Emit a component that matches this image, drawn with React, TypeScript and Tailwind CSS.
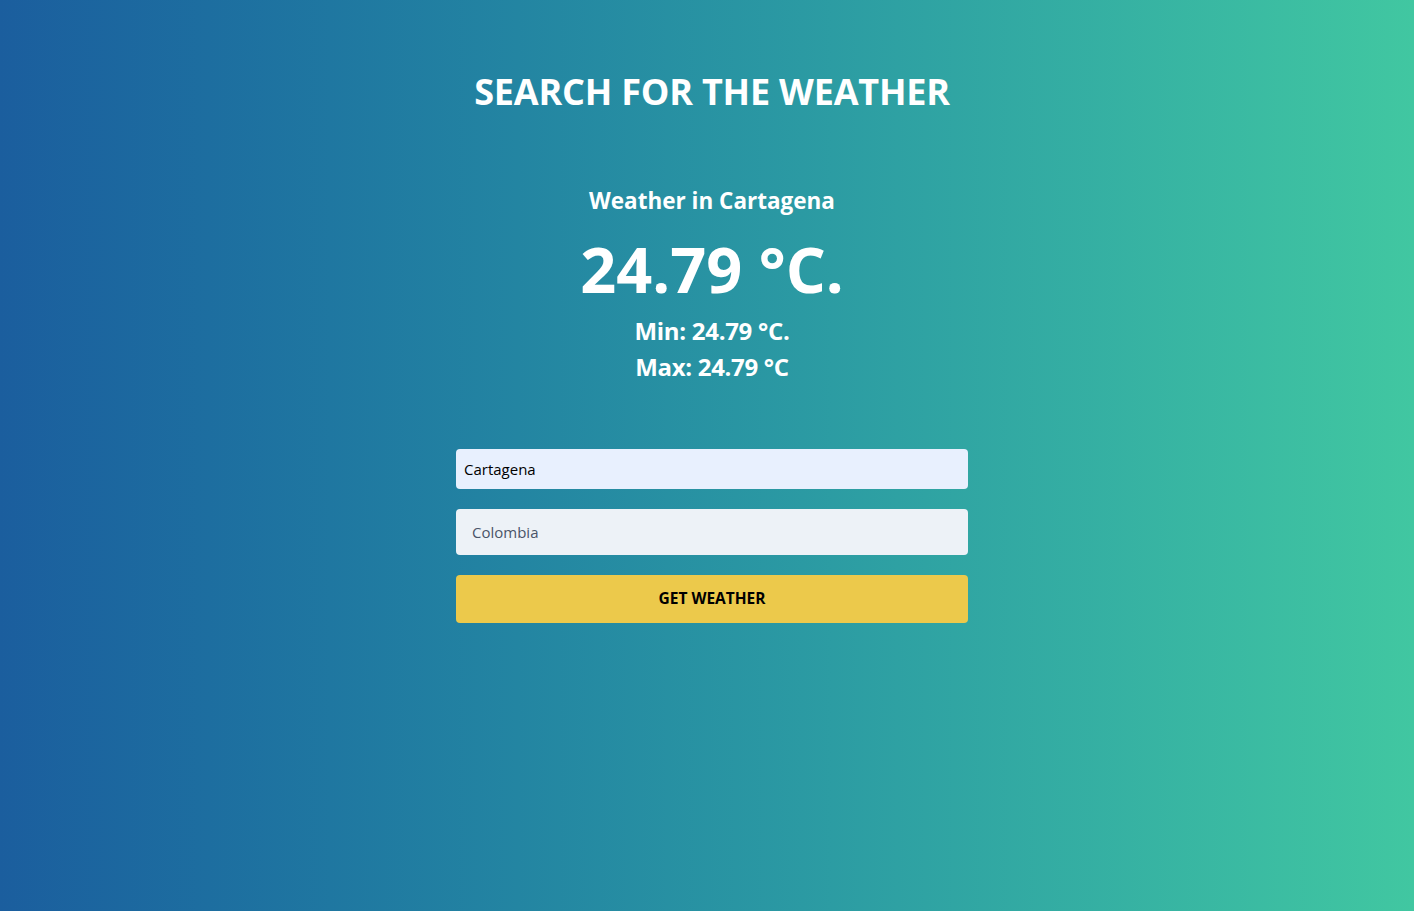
import React from 'react';

const font = { fontFamily: '"Open Sans", "Noto Sans", Arial, sans-serif' };

const App: React.FC = () => {
  return (
    <div
      className="flex min-h-[911px] w-full flex-col items-center bg-gradient-to-r from-[#1b5e9e] to-[#41c7a1] pl-[10px] text-white"
      style={font}
    >
      {/* Title */}
      <h1 className="mt-[68px] text-[36px] font-bold leading-[48px] tracking-[-0.2px]">SEARCH FOR THE WEATHER</h1>

      {/* Result */}
      <div className="mt-[69px] flex flex-col items-center">
        <h2 className="text-[22.5px] font-bold leading-[32px]">Weather in Cartagena</h2>
        <p className="mt-[12px] text-[63px] font-bold leading-[80px]">24.79 °C.</p>
        <p className="mt-[4px] text-[24px] font-bold leading-[36px] tracking-[-0.3px]">Min: 24.79 °C.</p>
        <p className="text-[24px] font-bold leading-[36px] tracking-[-0.3px]">Max: 24.79 °C</p>
      </div>

      {/* Form */}
      <form className="mt-[64px] flex w-[512px] flex-col" onSubmit={(e) => e.preventDefault()}>
        <input
          defaultValue="Cartagena"
          className="h-10 rounded bg-[#e8f0fe] px-2 text-[15px] text-black outline-none"
        />
        <input
          placeholder="Colombia"
          className="mt-5 h-[46px] rounded bg-[#edf2f7] px-4 text-[15px] text-black outline-none placeholder:text-[#4a5568]"
        />
        <button className="mt-5 h-12 rounded bg-[#ecc94b] text-[15.5px] font-bold text-black">GET WEATHER</button>
      </form>
    </div>
  );
};

export default App;
